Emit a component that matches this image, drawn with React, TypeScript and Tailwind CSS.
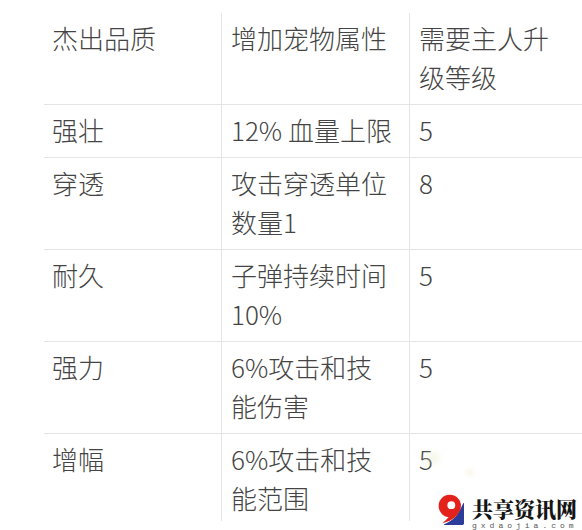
const rows: string[][] = [
  ["杰出品质", "增加宠物属性", "需要主人升级等级"],
  ["强壮", "12% 血量上限", "5"],
  ["穿透", "攻击穿透单位数量1", "8"],
  ["耐久", "子弹持续时间10%", "5"],
  ["强力", "6%攻击和技能伤害", "5"],
  ["增幅", "6%攻击和技能范围", "5"],
];

function Logo() {
  return (
    <div className="absolute left-[437px] top-[494px] flex items-start gap-[8px]">
      <svg width="27" height="31" viewBox="0 0 26 30">
        <path d="M25.6 8.5 A12.6 13.2 0 0 1 6.5 29.4 Q17 25.5 21 17.5 Q23.5 13 25.6 8.5 Z" fill="#2b3d98" />
        <circle cx="12.3" cy="11.6" r="10.8" fill="#e3221c" />
        <path d="M21.5 15.5 Q19 25.5 5 28.4 Q12.5 22.5 14.2 17 Z" fill="#e3221c" />
        <circle cx="13.8" cy="10.8" r="3.8" fill="#fff" />
      </svg>
      <div className="flex flex-col pt-[2px]">
        <span className="text-[21px] leading-[24px] font-black text-[#151515] [font-family:'Noto_Serif_CJK_SC','Noto_Sans_CJK_SC',serif]">
          共享资讯网
        </span>
        <span className="mt-[1px] text-[8px] leading-[10px] tracking-[4px] text-[#555] [font-family:'Liberation_Mono',monospace]">
          gxdaojia.com
        </span>
      </div>
    </div>
  );
}

export default function App() {
  return (
    <div className="relative w-[582px] h-[530px] overflow-hidden bg-white pt-[13px] pl-[44px] text-[26px] leading-[39px] font-light text-[#444] [font-family:'Noto_Sans_CJK_SC',sans-serif]">
      <div className="grid grid-cols-[177px_188px_1fr]">
        {rows.map((row, i) => {
          const last = i === rows.length - 1;
          return row.map((cell, j) => (
            <div
              key={`${i}-${j}`}
              className={[
                "pt-[5px] pb-[8px]",
                j === 0 ? "pl-[8px] pr-[8px]" : "",
                j === 1 ? "pl-[9px] pr-[19px] border-l border-[#e4e4e4]" : "",
                j === 2 ? "pl-[9px] pr-[24px] border-l border-[#e4e4e4]" : "",
                i === 1 ? "whitespace-nowrap" : "",
                last ? "h-[87px]" : "border-b border-[#e4e4e4]",
              ].join(" ")}
            >
              {cell}
            </div>
          ));
        })}
      </div>

      {/* faint smudge from the watermark */}
      <div className="absolute left-[424px] top-[452px] h-[12px] w-[16px] rounded-full bg-[#e6edc8] opacity-40 blur-[3px]" />
      <div className="absolute left-[466px] top-[470px] h-[5px] w-[8px] rounded-full bg-[#ece3c0] opacity-40 blur-[2px]" />
      <Logo />
    </div>
  );
}
